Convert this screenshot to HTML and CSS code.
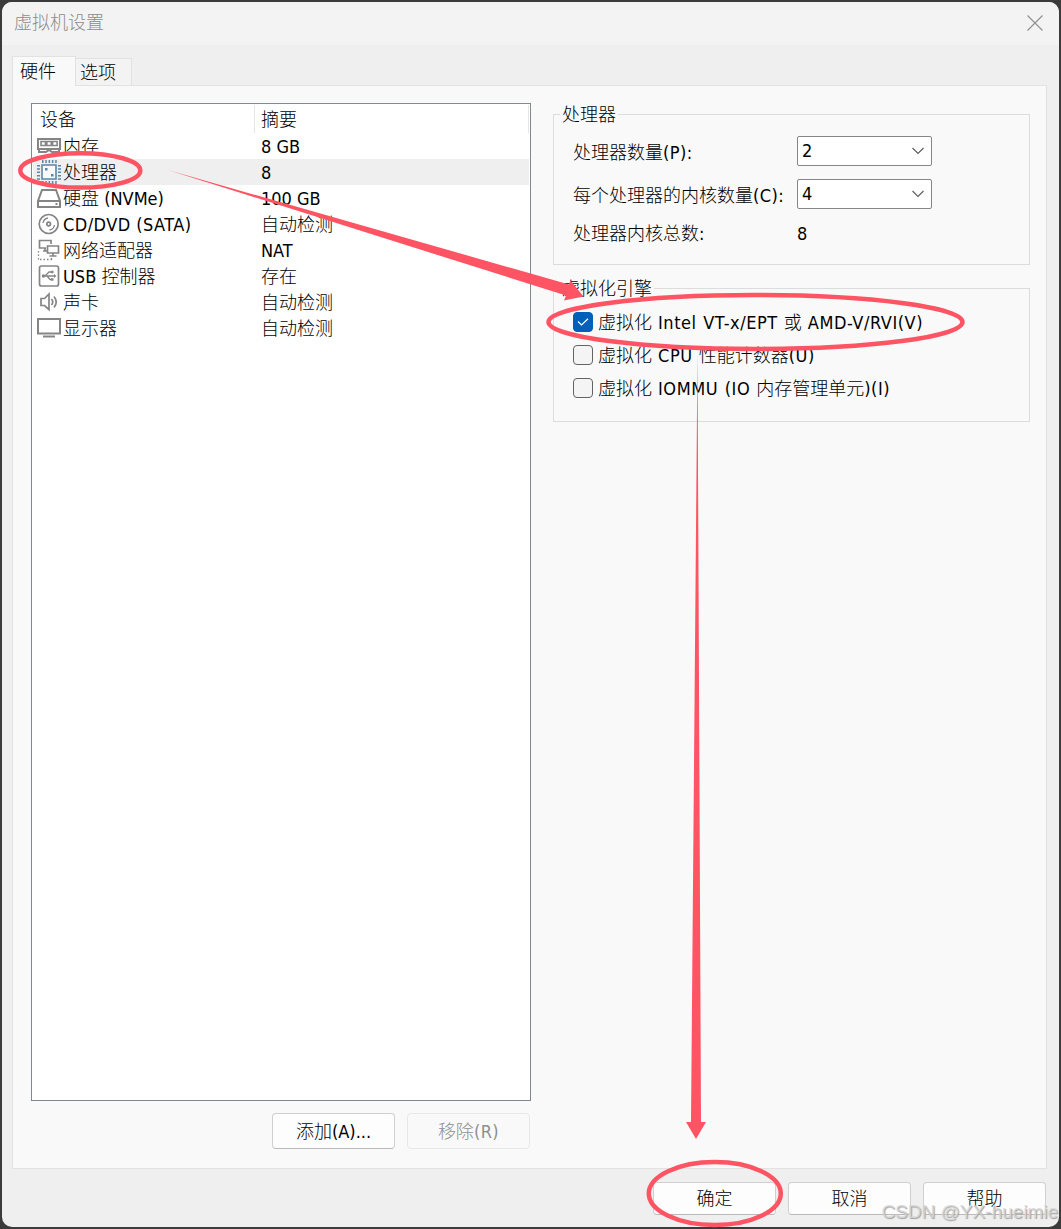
FILE: index.html
```
<!DOCTYPE html>
<html lang="zh-CN">

<head>
    <meta charset="UTF-8">
    <meta name="viewport" content="width=device-width, initial-scale=1.0">
    <title>虚拟机设置</title>
    <link rel="stylesheet" href="styles.css">
</head>

<body>

    <div class="window">
        <!-- title bar -->
        <header class="titlebar">
            <h1>虚拟机设置</h1>
            <svg class="close" width="16" height="16" viewBox="0 0 16 16">
                <path d="M.5 .5L15.5 15.5M15.5 .5L.5 15.5" />
            </svg>
        </header>

        <!-- tabs -->
        <nav class="tabs">
            <div class="tab active">硬件</div>
            <div class="tab">选项</div>
        </nav>

        <main class="panel">
            <!-- device list -->
            <section class="left">
                <div class="devices">
                    <div class="row head">
                        <div>设备</div>
                        <div>摘要</div>
                    </div>
                    <div class="row">
                        <div><svg class="icon" viewBox="0 0 24 24">
                                <path d="M1 5H23V15H1Z" />
                                <path class="chips" d="M4 7.500H8.500V11.500H4ZM9.800 7.500H14.300V11.500H9.800ZM15.600 7.500H20.100V11.500H15.600Z" />
                                <path d="M2 15V18H9L12 16L15 18H22V15" />
                            </svg>内存</div>
                        <div>8 GB</div>
                    </div>
                    <div class="row selected">
                        <div><svg class="icon cpu" viewBox="0 0 24 24">
                                <path class="body" d="M5 5H19V19H5Z" />
                                <path class="pins" d="M5 1.500H20M5 22.500H20M1.500 5V20M22.500 5V20" />
                                <path class="fill" d="M8 8h2.500v2.500h-2.500zM14 14h2.500v2.500h-2.500z" />
                            </svg>处理器</div>
                        <div>8</div>
                    </div>
                    <div class="row">
                        <div><svg class="icon" viewBox="0 0 24 24">
                                <path d="M5 4H19L23 15V21H1V15ZM1 15H23M18.500 18H20.500" />
                            </svg>硬盘 (NVMe)</div>
                        <div>100 GB</div>
                    </div>
                    <div class="row">
                        <div><svg class="icon net" viewBox="0 0 24 24">
                                <circle cx="11.700" cy="12" r="9.500" />
                                <circle cx="11.700" cy="12" r="1.800" />
                                <path class="thin" d="M6 11A6 6 0 0 1 11 6M17.500 13A6 6 0 0 1 12.500 18" />
                            </svg><span class="en">CD/DVD (SATA)</span></div>
                        <div>自动检测</div>
                    </div>
                    <div class="row">
                        <div><svg class="icon net" viewBox="0 0 24 24">
                                <path d="M9 10H2.500V2.500H14V6M6 13H10M8 10V13" />
                                <path d="M10.500 8H21.500V15H10.500ZM16 15V18M12.500 18H19.500" />
                                <path class="dots" d="M1.500 13V22M3 21.500H15M14.500 20V22" />
                            </svg>网络适配器</div>
                        <div>NAT</div>
                    </div>
                    <div class="row">
                        <div><svg class="icon net" viewBox="0 0 24 24">
                                <rect x="2.500" y="2" width="19" height="20" rx="2" />
                                <path class="thin" d="M6 12H18M8 12L12 8H14.500M10 12L13 15.500H15" />
                                <circle class="fill" cx="6.500" cy="12" r="1.800" />
                                <path class="fill" d="M17 10L19.500 12L17 14ZM14 6.800h2.500v2.500h-2.500zM14 14.300h2.500v2.500h-2.500z" />
                            </svg>USB 控制器</div>
                        <div>存在</div>
                    </div>
                    <div class="row">
                        <div><svg class="icon net" viewBox="0 0 24 24">
                                <path d="M4 8.500H7.500L12 4V19.500L7.500 15.500H4Z" />
                                <path d="M14.500 9Q17 12 14.500 15M17 6.500Q21.500 12 17 17.500" />
                            </svg>声卡</div>
                        <div>自动检测</div>
                    </div>
                    <div class="row">
                        <div><svg class="icon" viewBox="0 0 24 24">
                                <path d="M1 3H23V17.500H1Z" />
                                <path d="M6 20.500H18" />
                            </svg>显示器</div>
                        <div>自动检测</div>
                    </div>
                </div>
                <div class="actions">
                    <button type="button">添加(A)...</button>
                    <button type="button" disabled>移除<span class="en">(R)</span></button>
                </div>
            </section>

            <!-- processor options -->
            <section class="right">
                <fieldset class="group cpu-group">
                    <legend>处理器</legend>
                    <div class="field">
                        <span class="label">处理器数量<span class="en">(P):</span></span>
                        <div class="combo">2<svg width="12" height="8" viewBox="0 0 12 8"><path d="M.5 1L6 6.500L11.500 1" /></svg></div>
                    </div>
                    <div class="field">
                        <span class="label">每个处理器的内核数量<span class="en">(C):</span></span>
                        <div class="combo">4<svg width="12" height="8" viewBox="0 0 12 8"><path d="M.5 1L6 6.500L11.500 1" /></svg></div>
                    </div>
                    <div class="field total">
                        <span class="label">处理器内核总数:</span>
                        <span class="label">8</span>
                    </div>
                </fieldset>

                <fieldset class="group virt-group">
                    <legend>虚拟化引擎</legend>
                    <div class="check">
                        <span class="box checked"><svg width="12" height="8" viewBox="0 0 12 8"><path d="M1 3.500L4.500 7L11 .8" /></svg></span>
                        <span class="label">虚拟化 <span class="en">Intel VT-x/EPT</span> 或 <span class="en">AMD-V/RVI(V)</span></span>
                    </div>
                    <div class="check">
                        <span class="box"></span>
                        <span class="label">虚拟化 <span class="en">CPU</span> 性能计数器<span class="en">(U)</span></span>
                    </div>
                    <div class="check">
                        <span class="box"></span>
                        <span class="label">虚拟化 <span class="en">IOMMU (IO</span> 内存管理单元<span class="en">)(I)</span></span>
                    </div>
                </fieldset>
            </section>
        </main>

        <footer class="footer">
            <button type="button">确定</button>
            <button type="button">取消</button>
            <button type="button">帮助</button>
        </footer>
    </div>

    <!-- red marks over the dialog -->
    <svg class="marks" width="1061" height="1229" viewBox="0 0 1061 1229">
        <ellipse cx="80.300" cy="170.400" rx="60" ry="17.200" />
        <ellipse cx="755.500" cy="322" rx="207" ry="27" />
        <ellipse cx="714.800" cy="1193.500" rx="66" ry="31.500" />
        <path d="M168 170L569 284.500L570.500 280.500L583.500 296.500L564 300.500L566 295.500Z" />
        <path d="M697.500 352L701 1122H706L696 1139L686 1122H691Z" />
    </svg>
    <div class="watermark">CSDN @YX-hueimie</div>

</body>

</html>
```
FILE: styles.css
```
* {
    box-sizing: border-box;
}

body {
    margin: 0;
    padding: 2px;
    height: 1229px;
    background-color: #3c3b3c;
    font-family: "DejaVu Sans Condensed", "Noto Sans CJK SC Light", "Noto Sans CJK SC", sans-serif;
    font-size: 18px;
    font-weight: 300;
    line-height: 26px;
    color: #000;
    position: relative;
    overflow: hidden;
}

.window {
    width: 1057px;
    height: 1225px;
    background-color: #efefef;
    border-radius: 10px;
    overflow: hidden;
    white-space: nowrap;
}

.titlebar {
    height: 43px;
    padding: 0 16px 2px 12px;
    display: flex;
    justify-content: space-between;
    align-items: center;
    background-color: #f3f3f3;
}

h1 {
    margin: 0;
    font-size: 18px;
    font-weight: normal;
    color: #8c8c8c;
}

svg {
    fill: none;
    flex: none;
}

.close {
    stroke: #909090;
    stroke-width: 1.2;
}

/* latin text runs a bit wider */
.en {
    letter-spacing: 0.45px;
}

/* tabs */
.tabs {
    height: 40px;
    padding: 11px 0 0 10px;
    display: flex;
    align-items: flex-end;
}

.tab {
    width: 56px;
    height: 27px;
    padding-left: 4px;
    line-height: 28px;
    border: 1px solid #e2e2e2;
    border-left: 0;
    border-bottom: 0;
    background-color: #f3f3f3;
}

.tab.active {
    width: 64px;
    height: 30px;
    margin-bottom: -1px;
    padding-left: 7px;
    line-height: 29px;
    border-left: 1px solid #e2e2e2;
    background-color: #f9f9f9;
    z-index: 1;
}

.panel {
    width: 1035px;
    height: 1084px;
    margin-left: 10px;
    padding: 17px 16px 0 18px;
    display: flex;
    justify-content: space-between;
    border: 1px solid #e2e2e2;
    background-color: #f9f9f9;
}

.left {
    width: 500px;
}

/* device table */
.devices {
    height: 998px;
    padding: 1px;
    border: 1px solid #828790;
    background-color: #fff;
}

.row {
    height: 26px;
    display: grid;
    grid-template-columns: 222px 1fr;
    align-items: center;
}

.row > div {
    height: 26px;
    padding-top: 2px;
    display: flex;
    align-items: center;
    white-space: pre;
}

.row > div:first-child {
    padding-left: 4px;
}

.row > div:last-child {
    padding-left: 6px;
}

.row.head {
    height: 28px;
}

.row.head > div {
    height: 28px;
    border-right: 1px solid #e5e5e5;
}

.row.head > div:first-child {
    padding-left: 7px;
}

.row.selected {
    background-color: #efefef;
}

.icon {
    width: 24px;
    height: 24px;
    margin-top: -2px;
    margin-right: 2px;
    stroke: #858585;
    stroke-width: 2;
}

.icon.net {
    stroke-width: 1.7;
}

.icon.cpu {
    stroke: #5a87a5;
}

.icon .body {
    fill: #f7f9fa;
    stroke-width: 1.6;
}

.icon .pins {
    stroke-width: 3;
    stroke-dasharray: 1.500 1.800;
}

.icon .dots {
    stroke-width: 1.3;
    stroke-dasharray: 1.500 2;
}

.icon .thin {
    stroke-width: 1.3;
}

.icon .chips {
    stroke-width: 1.6;
}

.icon .fill {
    fill: #858585;
    stroke: none;
}

.icon.cpu .fill {
    fill: #5a87a5;
}

/* buttons */
button {
    width: 123px;
    height: 33px;
    padding: 1px 0 0;
    border: 1px solid #d0d0d0;
    border-bottom-color: #bababa;
    border-radius: 4px;
    background-color: #fdfdfd;
    font: inherit;
    color: #000;
}

.actions {
    padding: 12px 1px 0 0;
    display: flex;
    justify-content: flex-end;
    gap: 12px;
}

.actions button {
    height: 36px;
    padding-top: 2px;
}

button:disabled {
    border-color: #e8e8e8;
    background-color: #f9f9f9;
    color: #8f8f8f;
}

/* option groups */
.right {
    width: 477px;
}

.group {
    min-width: 0;
    margin: 0;
    padding: 0 0 0 19px;
    border: 1px solid #dcdcdc;
}

legend {
    height: 22px;
    line-height: 24px;
    margin-left: -13px;
    padding: 0 2px;
}

.cpu-group {
    height: 162px;
}

.virt-group {
    height: 145px;
    margin-top: 12px;
}

.label {
    padding-top: 2px;
}

.field {
    height: 30px;
    margin-bottom: 13px;
    display: grid;
    grid-template-columns: 224px 135px;
    align-items: center;
}

.field .label {
    padding-top: 4px;
}

.cpu-group legend + .field {
    margin-top: 11px;
}

.field.total {
    margin-top: -5px;
}

.combo {
    height: 30px;
    padding: 0 7px 0 4px;
    display: flex;
    align-items: center;
    justify-content: space-between;
    border: 1px solid #868686;
    border-radius: 2px;
    background-color: #fff;
}

.combo svg {
    stroke: #606060;
    stroke-width: 1.2;
}

.check {
    height: 33px;
    display: flex;
    align-items: center;
    gap: 5px;
    word-spacing: 0.9px;
}

.check .en {
    letter-spacing: 0.55px;
}

.virt-group legend + .check {
    margin-top: 6px;
}

.box {
    width: 20px;
    height: 20px;
    display: flex;
    align-items: center;
    justify-content: center;
    border: 1px solid #636363;
    border-radius: 4px;
    background-color: #f4f4f4;
}

.box.checked {
    border-color: #005fb8;
    background-color: #005fb8;
}

.box svg {
    stroke: #fff;
    stroke-width: 1.2;
}

.footer {
    padding: 13px 13px 0 0;
    display: flex;
    justify-content: flex-end;
    gap: 12px;
}

/* red ellipses and arrows */
.marks {
    position: absolute;
    left: 0;
    top: 0;
}

.marks ellipse {
    stroke: #ff5463;
    stroke-width: 4.5;
}

.marks path {
    fill: #ff5463;
}

.watermark {
    position: absolute;
    right: 3px;
    bottom: 4px;
    font-family: "Liberation Sans", sans-serif;
    font-size: 19px;
    color: rgba(215, 215, 215, 0.8);
    text-shadow: 1px 1px 1px #a0a0a0;
}
```
